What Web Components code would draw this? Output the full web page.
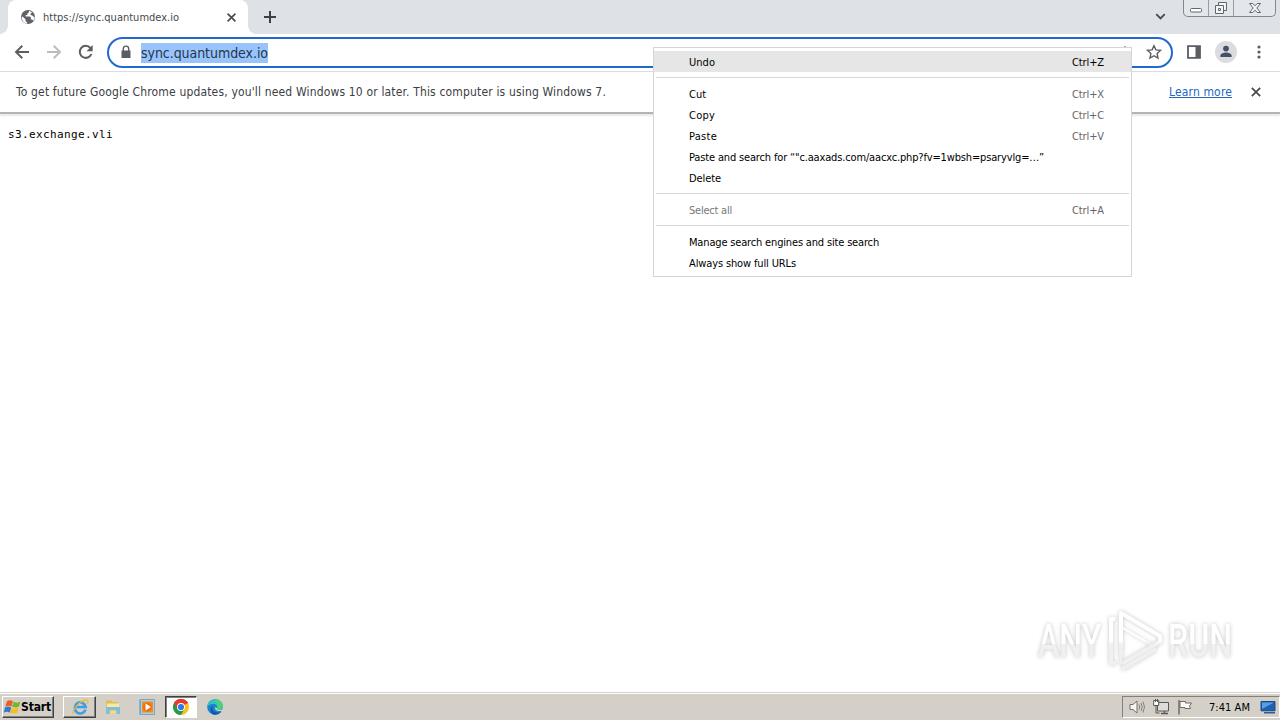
<!DOCTYPE html>
<html lang="en">
<head>
<meta charset="utf-8">
<title>sync.quantumdex.io</title>
<style>
  html, body {
    margin: 0;
    width: 1280px;
    height: 720px;
    overflow: hidden;
    background: #fff;
    font-family: "DejaVu Sans Condensed", "DejaVu Sans", sans-serif;
    font-stretch: condensed;
    font-size: 11px;
    color: #000;
  }
</style>
</head>
<body>
<desktop-screen></desktop-screen>

<script>
  // Attaches an open root and fills it with the given markup.
  function mount(host, html) {
    const template = document.createElement('template');
    template.innerHTML = html;
    host.attachShadow({mode: 'open'}).appendChild(template.content);
  }

  // One line of text whose tracking is set so that it takes `fit` pixels.
  class FitText extends HTMLElement {
    connectedCallback() {
      mount(this, '<style>:host { display: inline-block; white-space: nowrap; flex: none; }</style><slot></slot>');
      const width = parseFloat(this.getAttribute('fit'));
      const count = this.textContent.length;
      if (width && count) {
        const natural = this.getBoundingClientRect().width;
        this.style.letterSpacing = `${(width - natural) / count}px`;
      }
    }
  }

  const ICONS = {
    globe: `<circle cx="8" cy="8" r="7" fill="#5f6368"/><path d="M2.5 7.5l3 2.8v1.6l1.6 1.5v1.3C4 14.3 1.6 11.500 1.700 8zM9 1.800v1.500L7.400 4.500v1.400H5.700v1.700h4.200l1 1v2h1.300l1 1.200c1-1.200 1.400-2.500 1.400-3.900-1-.2-1.800-.5-2.300-1.300l-1.700-.6V4.500l1.500-.8A7 7 0 0 0 9 1.800z" fill="#fff"/>`,
    close: `<path d="M3.800 3.800l8.400 8.400M12.200 3.800l-8.400 8.400" stroke="#45494d" stroke-width="1.700"/>`,
    plus: `<path d="M8 2v12M2 8h12" stroke="#3c4043" stroke-width="2"/>`,
    back: `<path d="M15 8H2.500M8.300 1.800L2 8l6.300 6.200" fill="none" stroke="#5a5d61" stroke-width="1.900"/>`,
    forward: `<path d="M1 8h12.500M7.700 1.800L14 8l-6.300 6.200" fill="none" stroke="#babcbe" stroke-width="1.900"/>`,
    reload: `<path d="M13.400 10A6 6 0 1 1 12.400 4" fill="none" stroke="#5a5d61" stroke-width="2"/><path d="M14.700 1v6.200H8.500z" fill="#5a5d61"/>`,
    lock: `<path d="M3.500 6.500h9v7.500h-9z" fill="#5a5d61"/><path d="M5.300 7V4.800a2.700 2.700 0 0 1 5.400 0V7" fill="none" stroke="#5a5d61" stroke-width="1.400"/>`,
    star: `<path d="M8 1.700l1.900 4.200 4.600.5-3.400 3.100.9 4.500-4-2.300-4 2.300.9-4.500-3.400-3.100 4.600-.5z" fill="none" stroke="#5a5d61" stroke-width="1.400"/>`,
    share: `<path d="M8 2v8M5 5l3-3 3 3" fill="none" stroke="#5a5d61" stroke-width="1.400"/>`,
    panel: `<path d="M2 2.200h12v11.600H2z" fill="none" stroke="#5a5d61" stroke-width="1.800"/><path d="M9.500 2h4.500v12H9.500z" fill="#5a5d61"/>`,
    dots: `<g fill="#5a5d61"><circle cx="8" cy="3" r="1.600"/><circle cx="8" cy="8" r="1.600"/><circle cx="8" cy="13" r="1.600"/></g>`,
    person: `<circle cx="8" cy="8" r="8" fill="#dadce0"/><circle cx="8" cy="5.500" r="2.100" fill="#475069"/><path d="M3.900 11.700v-1c0-1.700 2.700-2.300 4.100-2.300s4.100.6 4.100 2.300v1z" fill="#475069"/>`,
    chevron: `<path d="M3.500 5.500L8 10l4.500-4.500" fill="none" stroke="#45494d" stroke-width="1.900"/>`,
    minimize: `<rect x="2.500" y="8.500" width="11" height="3.500" rx="1" fill="#fff" stroke="#62656b"/>`,
    restore: `<g fill="#f4f5f7" stroke="#62656b"><path d="M5.500 2.500h8v8h-8z"/><path d="M2.500 5.500h8v8h-8z"/><path d="M5.500 8.500h2v2h-2z"/></g>`,
    wclose: `<path d="M2.500 3.500h3.300L8 5.800l2.200-2.300h3.300L9.800 8l3.700 4.500h-3.300L8 10.200l-2.200 2.300H2.500L6.200 8z" fill="#f4f5f7" stroke="#62656b"/>`,
    flag: `<path d="M2 2.300c2.200-1.500 3.800-1.200 5.900 0L6.500 7.500c-2-1.100-3.900-1.200-6.200 0z" fill="#ee5b25"/><path d="M8.600 2.800c2.300 1.100 4.200 1.100 6.800 0l-1.500 5c-2.200 1-4.200.9-6.800-.1z" fill="#75b72c"/><path d="M0 8.500c2.200-1.300 4-1.100 6.200 0l-1.400 5.200c-2-1.200-3.900-1.200-6.200 0z" fill="#3678c8"/><path d="M6.900 8.900c2.300 1.100 4.200 1 6.800 0l-1.500 5c-2.300 1-4.200.9-6.800-.1z" fill="#f8bd19"/>`,
    ie: `<path d="M13.500 10.700A5.500 5.500 0 1 1 13.700 8H4" fill="none" stroke="#3aa0e3" stroke-width="2.600"/><path d="M1.800 15C-1 11.500 9 .8 14.500 1c2 .1 1.400 2.500.6 3.700" fill="none" stroke="#edb938" stroke-width="1.300"/>`,
    folder: `<path d="M1 1.500h5l1 1.500h6V14H1z" fill="#e2bd52"/><path d="M2 4.500h12v6H2z" fill="#f8e9a2"/><path d="M1 8h14v7h-3.500v-4h-7v4H1z" fill="#7fbfdb"/><path d="M5 11.500h6V14H5z" fill="#f3dc85"/>`,
    media: `<path d="M0 .5h13v15H0z" fill="#87b5d4"/><path d="M1.500.5h14v15h-14z" fill="#a9cfe8" stroke="#6d9dbd" stroke-width=".8"/><path d="M3 2.500h11v11H3z" fill="#f58b1c"/><circle cx="8.500" cy="8" r="4.500" fill="#f06f0c"/><path d="M6.500 4.500v7L12 8z" fill="#fff"/>`,
    chrome: `<circle cx="8" cy="8" r="8" fill="#fbc116"/><path d="M8 8L1.070 4A8 8 0 0 1 14.930 4z" fill="#e33b2e"/><path d="M1.070 4A8 8 0 0 0 8 16l3.500-6L8 8z" fill="#249a4c"/><path d="M8 4h6.930A8 8 0 0 0 1.070 4L4.600 10z" fill="#e33b2e"/><circle cx="8" cy="8" r="4" fill="#fff"/><circle cx="8" cy="8" r="3.100" fill="#3478e5"/>`,
    edge: `<circle cx="8" cy="8" r="7.800" fill="#1686d1"/><path d="M.3 7.500C1 2.500 4 .2 8 .2c5 0 7.800 3.500 7.800 6.600 0 3-2.300 4.200-4.500 4.200-1.600 0-2.500-.7-1.500-1.700 1.300-2.500-1-4.500-3.600-4.300C3.500 5.100 1.500 6 .3 7.500z" fill="#37bfc0"/><path d="M10 .6c4 .9 5.800 3.700 5.800 6.200 0 3-2.300 4.200-4.500 4.200-1.600 0-2.500-.7-1.500-1.700C11.500 6 10 3 7 2z" fill="#50cf79"/><path d="M6.200 6.500c-3 4.500 2.300 8.200 7.900 6.500A8 8 0 0 1 7 15.700C2.500 14 2.700 8 6.200 6.500z" fill="#125aa5"/><path d="M8.500 8c-1.300 2.500 1.200 4.700 5.900 3.900l1.600.4V10c-1 .8-6.500 2-6-.5z" fill="#d4d0c8"/>`,
    sound: `<path d="M1 5.500h3L8 2v12l-4-3.500H1z" fill="#f7f7f5" stroke="#72706b"/><path d="M10 5.500q1.500 2.500 0 5M12 4q2.500 4 0 8M14 2.500q3 5.500 0 11" fill="none" stroke="#85827c"/>`,
    network: `<path d="M4.500 3.500h11v8.500h-11z" fill="#dcdcdc" stroke="#5a5854"/><path d="M8 14.500h7M11.500 12v2" stroke="#5a5854" stroke-width="1.300"/><path d="M.7 1.500h5v5h-5z" fill="#fff" stroke="#5a5854"/><path d="M2.500 0v3M4.500 0v3M3 6.500V14h3.500" fill="none" stroke="#5a5854"/>`,
    action: `<path d="M2 1v14.500" stroke="#716e69" stroke-width="1.500"/><path d="M3 2.500h5.500V4h6l-2 3 1 2.500H8V8.500H3z" fill="#fafafa" stroke="#716e69"/>`,
    display: `<path d="M1 2.500h14v9.300H1z" fill="#1d60b4" stroke="#174b87"/><path d="M2 3.500h12L2 10z" fill="#58a0df"/><path d="M4 13h11v1.500H4z" fill="#315d8c"/>`
  };

  class UiIcon extends HTMLElement {
    connectedCallback() {
      const size = this.getAttribute('size') || 16;
      mount(this, `
        <style>
          :host { display: inline-flex; flex: none; width: ${size}px; height: ${size}px; }
          svg { display: block; overflow: visible; }
        </style>
        <svg width="${size}" height="${size}" viewBox="0 0 16 16">${ICONS[this.getAttribute('name')]}</svg>`);
    }
  }

  class TabStrip extends HTMLElement {
    connectedCallback() {
      mount(this, `
        <style>
          :host { display: flex; height: 34px; background: #dee1e6; }
          .tab {
            display: flex; align-items: center; box-sizing: border-box; width: 240px; height: 34px;
            margin-left: 8px; padding: 0 9px 0 12px; background: #fff;
            border-radius: 8px 8px 0 0; position: relative; color: #45494d;
          }
          .tab::before, .tab::after {
            content: ""; position: absolute; bottom: 0; width: 8px; height: 8px;
          }
          .tab::before { left: -8px; background: radial-gradient(circle at 0 0, transparent 7.500px, #fff 8px); }
          .tab::after { right: -8px; background: radial-gradient(circle at 100% 0, transparent 7.500px, #fff 8px); }
          fit-text { margin: 0 auto 0 7px; }
          .add { margin: 9px 0 0 14px; }
          .down { margin: 9px 15px 0 auto; }
          .window {
            display: flex; box-sizing: border-box; width: 93px; height: 17px; margin-right: 4px;
            border: 1px solid #83878e; border-top: 0; border-radius: 0 0 5px 5px; background: #e3e6ea;
          }
          .window div { display: flex; justify-content: center; flex: 0 0 24px; border-right: 1px solid #9a9da3; }
          .window div:last-child { flex: 1; border: 0; }
        </style>
        <div class="tab">
          <ui-icon name="globe"></ui-icon>
          <fit-text fit="136">https://sync.quantumdex.io</fit-text>
          <ui-icon name="close" size="15"></ui-icon>
        </div>
        <ui-icon class="add" name="plus"></ui-icon>
        <ui-icon class="down" name="chevron" size="15"></ui-icon>
        <div class="window">
          <div><ui-icon name="minimize"></ui-icon></div>
          <div><ui-icon name="restore"></ui-icon></div>
          <div><ui-icon name="wclose"></ui-icon></div>
        </div>`);
    }
  }

  class BrowserToolbar extends HTMLElement {
    connectedCallback() {
      mount(this, `
        <style>
          :host {
            display: flex; align-items: center; box-sizing: border-box; height: 38px;
            padding: 0 13px 0 14px; background: #fff; border-bottom: 1px solid #dadce0;
          }
          .nav { display: flex; gap: 16px; margin-top: -1px; }
          .omnibox {
            display: flex; flex: none; align-items: center; box-sizing: border-box; width: 1066px; height: 31px;
            margin: 0 13px; padding: 0 9px; border: 2px solid #2169cf; border-radius: 16px;
          }
          .omnibox ui-icon { margin-top: -1px; }
          .url { margin-left: 7px; height: 20px; line-height: 20px; background: #99c4fb; font-size: 14px; color: #24364e; }
          .omnibox .share { margin: 0 13px 0 auto; }
          .tools { display: flex; align-items: center; gap: 13px; margin-top: -1px; }
          .tools ui-icon:last-child { margin-left: 1px; }
        </style>
        <div class="nav">
          <ui-icon name="back"></ui-icon>
          <ui-icon name="forward"></ui-icon>
          <ui-icon name="reload"></ui-icon>
        </div>
        <div class="omnibox">
          <ui-icon name="lock"></ui-icon>
          <fit-text class="url" fit="127">sync.quantumdex.io</fit-text>
          <ui-icon class="share" name="share"></ui-icon>
          <ui-icon class="star" name="star"></ui-icon>
        </div>
        <div class="tools">
          <ui-icon name="panel"></ui-icon>
          <ui-icon name="person" size="22"></ui-icon>
          <ui-icon name="dots"></ui-icon>
        </div>`);
    }
  }

  class InfoBar extends HTMLElement {
    connectedCallback() {
      mount(this, `
        <style>
          :host {
            display: flex; align-items: center; box-sizing: border-box; height: 42px;
            padding: 0 16px 1px; background: #fff; border-bottom: 2px solid #b4b4b4;
            box-shadow: 0 2px 2px #e8e8e8; font-size: 12px; color: #3c4043;
          }
          .link { margin-left: auto; color: #2667bd; text-decoration: underline; }
          ui-icon { margin-left: 16px; }
        </style>
        <fit-text fit="590">To get future Google Chrome updates, you'll need Windows 10 or later. This computer is using Windows 7.</fit-text>
        <fit-text class="link" fit="63">Learn more</fit-text>
        <ui-icon name="close"></ui-icon>`);
    }
  }

  class MenuItem extends HTMLElement {
    connectedCallback() {
      const keys = this.getAttribute('keys');
      mount(this, `
        <style>
          :host {
            display: flex; justify-content: space-between; align-items: center; box-sizing: border-box;
            height: 21px; padding: 2px 27px 0 35px;
          }
          :host([active]) { background: #e6e6e6; }
          :host([disabled]) { color: #777; }
          .keys { color: #666; }
          :host([active]) .keys { color: #000; }
        </style>
        <slot></slot>
        ${keys ? `<fit-text class="keys" fit="32">${keys}</fit-text>` : ''}`);
    }
  }

  class ContextMenu extends HTMLElement {
    connectedCallback() {
      mount(this, `
        <style>
          :host {
            display: block; box-sizing: border-box; width: 479px; padding: 3px 0;
            background: #fff; border: 1px solid #d5d5d5;
          }
          hr { height: 1px; margin: 5px 2px; border: 0; background: #d7d7d7; }
        </style>
        <menu-item active keys="Ctrl+Z"><fit-text fit="26">Undo</fit-text></menu-item>
        <hr>
        <menu-item keys="Ctrl+X"><fit-text fit="17">Cut</fit-text></menu-item>
        <menu-item keys="Ctrl+C"><fit-text fit="26">Copy</fit-text></menu-item>
        <menu-item keys="Ctrl+V"><fit-text fit="28">Paste</fit-text></menu-item>
        <menu-item><fit-text fit="355">Paste and search for “"c.aaxads.com/aacxc.php?fv=1wbsh=psaryvlg=…”</fit-text></menu-item>
        <menu-item><fit-text fit="32">Delete</fit-text></menu-item>
        <hr>
        <menu-item disabled keys="Ctrl+A"><fit-text fit="43">Select all</fit-text></menu-item>
        <hr>
        <menu-item><fit-text fit="190">Manage search engines and site search</fit-text></menu-item>
        <menu-item><fit-text fit="107">Always show full URLs</fit-text></menu-item>`);
    }
  }

  class AnyRunMark extends HTMLElement {
    connectedCallback() {
      mount(this, `
        <style>
          :host {
            display: flex; align-items: center; gap: 4px;
            font: 500 46px/60px Roboto, sans-serif; filter: drop-shadow(0 0 2px #c4c4c4);
          }
          .word { display: block; width: 66px; }
          .word span {
            display: inline-block; transform: scaleX(.7); transform-origin: 0 50%; color: transparent;
            background: linear-gradient(#fff 55%, #f0f0f0 55%); background-clip: text; -webkit-background-clip: text;
          }
          svg { flex: none; }
        </style>
        <div class="word"><span>ANY</span></div>
        <svg width="56" height="62" viewBox="0 0 56 62" fill="none" stroke="url(#fade)" stroke-width="4" stroke-linejoin="round">
          <linearGradient id="fade" gradientUnits="userSpaceOnUse" x1="0" y1="0" x2="0" y2="62">
            <stop offset=".5" stop-color="#fff"/><stop offset=".55" stop-color="#f0f0f0"/>
          </linearGradient>
          <path d="M13 45V3l39 23v6L14 54"/><path d="M13 17l31 18-31 18z" stroke-width="2"/>
          <path d="M7 9H3v44h5M14 59l34-20"/>
        </svg>
        <div class="word"><span>RUN</span></div>`);
    }
  }

  class TaskBar extends HTMLElement {
    connectedCallback() {
      mount(this, `
        <style>
          :host {
            display: flex; align-items: center; box-sizing: border-box; height: 28px; padding: 1px 0 0 2px;
            background: #d4d0c8; border-top: 1px solid #d4d0c8; box-shadow: inset 0 1px #fff;
          }
          .button {
            display: flex; align-items: center; justify-content: center; box-sizing: border-box; height: 22px;
            border: 1px solid; border-color: #fff #404040 #404040 #fff; box-shadow: inset -1px -1px #808080;
          }
          .start { width: 52px; font-weight: bold; font-size: 12px; }
          .ie { width: 33px; margin-left: 9px; }
          .plain { margin-left: 9px; }
          .media { margin-left: 18px; }
          .chrome { width: 32px; margin-left: 10px; background: #fff; border-color: #404040 #fff #fff #404040; box-shadow: inset 1px 1px #808080; }
          .edge { margin-left: 10px; }
          .tray {
            display: flex; align-items: center; box-sizing: border-box; width: 158px; height: 22px;
            margin-left: auto; padding: 0 3px 0 6px; border: 1px solid; border-color: #808080 #fff #fff #808080;
          }
          .tray ui-icon + ui-icon { margin-left: 8px; }
          .clock { margin-left: 16px; }
          .tray .display { margin-left: auto; }
        </style>
        <div class="button start"><ui-icon name="flag"></ui-icon><fit-text fit="30">Start</fit-text></div>
        <div class="button ie"><ui-icon name="ie"></ui-icon></div>
        <ui-icon class="plain" name="folder"></ui-icon>
        <ui-icon class="media" name="media"></ui-icon>
        <div class="button chrome"><ui-icon name="chrome"></ui-icon></div>
        <ui-icon class="edge" name="edge"></ui-icon>
        <div class="tray">
          <ui-icon name="sound"></ui-icon>
          <ui-icon name="network"></ui-icon>
          <ui-icon name="action"></ui-icon>
          <fit-text class="clock" fit="41">7:41 AM</fit-text>
          <ui-icon class="display" name="display"></ui-icon>
        </div>`);
    }
  }

  class DesktopScreen extends HTMLElement {
    connectedCallback() {
      mount(this, `
        <style>
          :host { display: flex; flex-direction: column; position: relative; width: 1280px; height: 720px; }
          tab-strip, browser-toolbar, info-bar, task-bar { flex: none; }
          main { flex: 1; padding: 14px 8px; font-family: "DejaVu Sans Mono", monospace; font-size: 11px; }
          context-menu { position: absolute; left: 653px; top: 47px; }
          any-run-mark { position: absolute; left: 1038px; top: 610px; }
        </style>
        <tab-strip></tab-strip>
        <browser-toolbar></browser-toolbar>
        <info-bar></info-bar>
        <main><fit-text fit="105">s3.exchange.vli</fit-text></main>
        <task-bar></task-bar>
        <any-run-mark></any-run-mark>
        <context-menu></context-menu>`);
    }
  }

  customElements.define('fit-text', FitText);
  customElements.define('ui-icon', UiIcon);
  customElements.define('tab-strip', TabStrip);
  customElements.define('browser-toolbar', BrowserToolbar);
  customElements.define('info-bar', InfoBar);
  customElements.define('menu-item', MenuItem);
  customElements.define('context-menu', ContextMenu);
  customElements.define('any-run-mark', AnyRunMark);
  customElements.define('task-bar', TaskBar);
  customElements.define('desktop-screen', DesktopScreen);
</script>
</body>
</html>
